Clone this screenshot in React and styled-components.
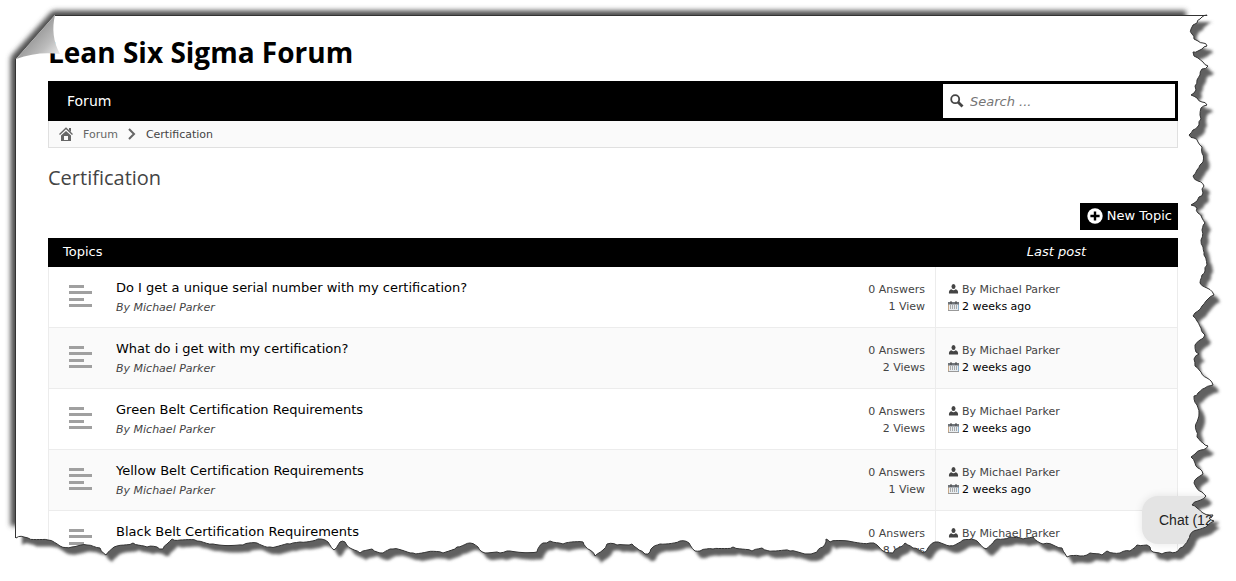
import React from "react";
import styled, { createGlobalStyle } from "styled-components";

const topics = [
  { title: "Do I get a unique serial number with my certification?", views: "1 View" },
  { title: "What do i get with my certification?", views: "2 Views" },
  { title: "Green Belt Certification Requirements", views: "2 Views" },
  { title: "Yellow Belt Certification Requirements", views: "1 View" },
  { title: "Black Belt Certification Requirements", views: "8 Views" },
];

// torn edge, from the top right corner down and back along the bottom
const tornEdge = [
  [1207, 15], [1202, 17], [1200, 19], [1197, 23], [1193, 25], [1191, 29], [1192, 34], [1194, 39], [1198, 41], [1203, 43], [1207, 46],
  [1202, 49], [1198, 51], [1193, 52], [1194, 56], [1198, 58], [1203, 62], [1208, 66], [1202, 69], [1200, 75], [1197, 80],
  [1195, 86], [1196, 90], [1191, 95], [1197, 98], [1202, 102], [1207, 105], [1201, 108], [1200, 115], [1201, 119], [1199, 125],
  [1193, 130], [1189, 135], [1194, 138], [1198, 142], [1202, 147], [1202, 153], [1203, 162], [1200, 165], [1197, 170], [1193, 176],
  [1198, 181], [1204, 186], [1202, 189], [1203, 193], [1199, 197], [1197, 201], [1191, 205], [1197, 208], [1198, 213], [1202, 218],
  [1205, 223], [1202, 230], [1201, 240], [1203, 247], [1204, 255], [1207, 265], [1205, 271], [1202, 275], [1200, 283], [1207, 288],
  [1214, 295], [1208, 299], [1202, 306], [1195, 313], [1193, 316], [1197, 321], [1201, 328], [1205, 335], [1200, 340], [1195, 345],
  [1196, 352], [1199, 354], [1194, 359], [1195, 366], [1201, 372], [1207, 378], [1213, 385], [1205, 388], [1198, 393], [1194, 396],
  [1197, 405], [1199, 413], [1197, 422], [1196, 430], [1197, 437], [1203, 443], [1208, 446], [1201, 450], [1195, 454], [1191, 457],
  [1195, 463], [1200, 469], [1203, 474], [1197, 478], [1194, 483], [1196, 487], [1202, 492], [1206, 496], [1198, 501], [1192, 505],
  [1197, 508], [1203, 513], [1213, 515], [1209, 518], [1214, 521], [1208, 525], [1197, 530], [1190, 535], [1188, 540], [1183, 547],
  [1178, 551], [1170, 552], [1162, 554], [1153, 552], [1150, 547], [1147, 545], [1137, 545], [1130, 551], [1120, 553], [1107, 551],
  [1102, 555], [1090, 553], [1080, 556], [1067, 557], [1062, 548], [1053, 545], [1043, 544], [1033, 537], [1023, 539], [1010, 537],
  [997, 539], [993, 543], [986, 549], [977, 541], [963, 540], [950, 546], [935, 542], [928, 548], [923, 553], [913, 548],
  [905, 543], [898, 548], [893, 553], [883, 551], [877, 545], [870, 543], [848, 541], [830, 542], [826, 539], [823, 547],
  [817, 552], [808, 554], [790, 551], [773, 551], [762, 548], [752, 551], [733, 547], [713, 549], [700, 551], [695, 551],
  [689, 543], [680, 541], [660, 544], [653, 547], [650, 552], [645, 554], [639, 550], [632, 544], [617, 545], [607, 544],
  [603, 550], [595, 556], [590, 550], [583, 542], [563, 544], [550, 541], [543, 543], [537, 552], [507, 551], [500, 553],
  [485, 553], [478, 547], [470, 543], [457, 547], [443, 553], [427, 552], [413, 553], [393, 549], [383, 553], [372, 549],
  [360, 553], [352, 549], [345, 542], [340, 542], [334, 550], [328, 542], [318, 539], [300, 542], [290, 544], [270, 547],
  [257, 543], [243, 545], [213, 544], [197, 541], [180, 540], [172, 539], [167, 544], [163, 549], [157, 547], [147, 547],
  [133, 543], [117, 546], [106, 555], [100, 548], [87, 545], [72, 547], [60, 546], [48, 540], [28, 538], [24, 537], [16, 538],
];

// break long segments into short uneven steps so the paper looks ripped
const roughen = (points) => {
  const out = [points[0]];
  for (let i = 1; i < points.length; i++) {
    const [x1, y1] = points[i - 1];
    const [x2, y2] = points[i];
    const len = Math.hypot(x2 - x1, y2 - y1);
    const steps = Math.max(1, Math.round(len / 3));
    for (let s = 1; s < steps; s++) {
      const t = s / steps;
      const j = Math.sin((i * 7 + s) * 12.9) * 1.1;
      out.push([
        x1 + (x2 - x1) * t - ((y2 - y1) / len) * j,
        y1 + (y2 - y1) * t + ((x2 - x1) / len) * j,
      ]);
    }
    out.push([x2, y2]);
  }
  return out.map((p) => p.map((n) => n.toFixed(1)).join(" ")).join("L");
};

const torn = roughen(tornEdge);
const paper = `M16 59L55 15L${torn}Z`;

const PaperEdge = () => (
  <EdgeSvg viewBox="0 0 1236 581" preserveAspectRatio="none" aria-hidden="true">
    <defs>
      <clipPath id="outside">
        <path d={`M0 0H1236V581H0Z${paper}`} clipRule="evenodd" />
      </clipPath>
      <filter id="soft" x="-5%" y="-5%" width="110%" height="110%">
        <feGaussianBlur stdDeviation="1.6" />
      </filter>
      <filter id="softer" x="-5%" y="-5%" width="110%" height="110%">
        <feGaussianBlur stdDeviation="2.6" />
      </filter>
      <linearGradient id="fold" gradientUnits="userSpaceOnUse" x1="34" y1="36" x2="58" y2="57">
        <stop offset="0" stopColor="#9c9c9c" />
        <stop offset="0.5" stopColor="#bcbcbc" />
        <stop offset="1" stopColor="#ececec" />
      </linearGradient>
    </defs>
    <g clipPath="url(#outside)">
      <rect width="1236" height="581" fill="#fff" />
      <path d={paper} fill="#606060" transform="translate(6 7)" filter="url(#soft)" />
      <path
        d="M16 526V59L55 16H1186"
        fill="none"
        stroke="#505050"
        strokeWidth="11"
        strokeLinejoin="round"
        filter="url(#softer)"
      />
    </g>
    <path d="M16 59L55 15Q50 36 60 54Q38 51 16 59Z" fill="url(#fold)" />
    <path d={`M15.5 538V59M55 15.5H1207L${torn}`} fill="none" stroke="#333" strokeWidth="1" />
  </EdgeSvg>
);

const HomeIcon = () => (
  <svg width="14" height="14" viewBox="0 0 14 14" aria-hidden="true">
    <path d="M0.5 7.5L7 1.3L13.5 7.5" fill="none" stroke="#666" strokeWidth="1.4" />
    <path d="M10 1H12V5L10 3.2ZM2 8.6L7 4L12 8.6V14H2Z" fill="#666" />
    <path d="M5 9H9V13H5Z" fill="#fafafa" />
  </svg>
);

const ChevronIcon = () => (
  <svg width="8" height="12" viewBox="0 0 8 12" aria-hidden="true">
    <path d="M1 1L6 6L1 11" fill="none" stroke="#666" strokeWidth="2" />
  </svg>
);

const SearchIcon = () => (
  <svg width="14" height="14" viewBox="0 0 14 14" aria-hidden="true">
    <circle cx="5.2" cy="5.2" r="4" fill="none" stroke="#444" strokeWidth="1.8" />
    <path d="M8.2 8.2L12.5 12.5" stroke="#444" strokeWidth="2.8" />
  </svg>
);

const PlusIcon = () => (
  <svg width="16" height="16" viewBox="0 0 16 16" aria-hidden="true">
    <circle cx="8" cy="8" r="7.7" fill="#fff" />
    <path d="M8 3.4V12.6M3.4 8H12.6" stroke="#000" strokeWidth="2.4" />
  </svg>
);

const TopicIcon = () => (
  <svg width="23" height="22" viewBox="0 0 23 22" aria-hidden="true">
    <path d="M0 1.5H15M0 7.5H23M0 14.5H15M0 20.5H23" stroke="#a0a0a0" strokeWidth="3" />
  </svg>
);

const UserIcon = () => (
  <svg width="11" height="11" viewBox="0 0 11 11" aria-hidden="true">
    <ellipse cx="5.5" cy="2.6" rx="2" ry="2.5" fill="#444" />
    <path d="M1 9.5Q0.4 6.2 3.4 5.3Q5.5 7.2 7.6 5.3Q10.6 6.2 10 9.5Z" fill="#444" />
  </svg>
);

const CalendarIcon = () => (
  <svg width="11" height="11" viewBox="0 0 11 11" aria-hidden="true">
    <path d="M0.5 1.5H10.5V9.5H0.5Z" fill="#e8ecef" />
    <path d="M0.5 1.5V10" stroke="#c9a987" />
    <path d="M10.5 1.5V10" stroke="#8db4d2" />
    <path d="M0 9.5H11" stroke="#999" />
    <path d="M0 1H11V3.5H0Z" fill="#70757a" />
    <path d="M3 0V3M8 0V3" stroke="#444" />
    <path d="M2 5H9.5M2 7H9.5" stroke="#666" strokeDasharray="1 1" />
  </svg>
);

const App = () => {
  return (
    <>
      <GlobalStyle />
      <Page>
        <Content>
          <SiteTitle>Lean Six Sigma Forum</SiteTitle>
          <Nav>
            <NavLink href="#forum">Forum</NavLink>
            <SearchBox>
              <SearchIcon />
              <input type="text" placeholder="Search ..." aria-label="Search" />
            </SearchBox>
          </Nav>
          <Breadcrumb>
            <HomeIcon />
            <a href="#forum">Forum</a>
            <ChevronIcon />
            <span>Certification</span>
          </Breadcrumb>
          <Heading>Certification</Heading>
          <Actions>
            <NewTopic type="button">
              <PlusIcon />
              New Topic
            </NewTopic>
          </Actions>
          <TopicTable>
            <colgroup>
              <Col $width={68} />
              <Col />
              <Col $width={120} />
              <Col $width={243} />
            </colgroup>
            <thead>
              <tr>
                <th colSpan="3">Topics</th>
                <LastHead>Last post</LastHead>
              </tr>
            </thead>
            <tbody>
              {topics.map((topic) => (
                <TopicRow key={topic.title}>
                  <IconCell>
                    <TopicIcon />
                  </IconCell>
                  <TitleCell>
                    <a href="#topic">{topic.title}</a>
                    <p>By Michael Parker</p>
                  </TitleCell>
                  <StatsCell>
                    <div>0 Answers</div>
                    <div>{topic.views}</div>
                  </StatsCell>
                  <LastCell>
                    <Meta>
                      <UserIcon />
                      By Michael Parker
                    </Meta>
                    <Meta $dark>
                      <CalendarIcon />
                      <a href="#post">2 weeks ago</a>
                    </Meta>
                  </LastCell>
                </TopicRow>
              ))}
            </tbody>
          </TopicTable>
        </Content>
        <ChatButton type="button">Chat (12)</ChatButton>
        <PaperEdge />
      </Page>
    </>
  );
};

const GlobalStyle = createGlobalStyle`
  * {
    box-sizing: border-box;
  }
  body {
    margin: 0;
    background: #fff;
    color: #444;
    font-family: Verdana, "DejaVu Sans", sans-serif;
    font-size: 11px;
  }
  a {
    color: inherit;
    text-decoration: none;
  }
  svg {
    flex-shrink: 0;
  }
`;

const Page = styled.div`
  position: relative;
  height: 100vh;
  overflow: hidden;
`;

const Content = styled.main`
  padding: 32px 58px 0 48px;
`;

const SiteTitle = styled.h1`
  margin: 0 0 9px;
  color: #000;
  font-family: "Open Sans", sans-serif;
  font-size: 28px;
  font-weight: 700;
  line-height: 40px;
`;

const Nav = styled.nav`
  display: flex;
  justify-content: space-between;
  align-items: center;
  height: 40px;
  padding: 3px;
  background: #000;
`;

const NavLink = styled.a`
  padding-left: 16px;
  color: #fff;
  font-size: 14px;
`;

const SearchBox = styled.label`
  display: flex;
  align-items: center;
  gap: 6px;
  width: 232px;
  height: 34px;
  padding: 0 7px;
  background: #fff;
  input {
    flex: 1;
    min-width: 0;
    padding: 0;
    border: none;
    outline: none;
    background: transparent;
    font-family: inherit;
    font-size: 13px;
    font-style: italic;
    &::placeholder {
      color: #757575;
    }
  }
`;

const Breadcrumb = styled.div`
  display: flex;
  align-items: center;
  gap: 10px;
  height: 27px;
  padding: 0 10px;
  border: 1px solid #e0e0e0;
  border-top: none;
  background: #fafafa;
  a {
    color: #666;
  }
`;

const Heading = styled.h2`
  margin: 16px 0 11px;
  font-family: "Open Sans", sans-serif;
  font-size: 20px;
  font-weight: 400;
  line-height: 28px;
`;

const Actions = styled.div`
  display: flex;
  justify-content: flex-end;
  margin-bottom: 8px;
`;

const NewTopic = styled.button`
  display: flex;
  align-items: center;
  gap: 4px;
  height: 27px;
  padding: 0 6px 2px 7px;
  border: none;
  background: #000;
  color: #fff;
  font-family: inherit;
  font-size: 13px;
  cursor: pointer;
`;

const TopicTable = styled.table`
  width: 100%;
  border-collapse: separate;
  border-spacing: 0;
  table-layout: fixed;
  th {
    height: 29px;
    padding: 0 15px 2px;
    background: #000;
    color: #fff;
    font-size: 13px;
    font-weight: 400;
    text-align: left;
  }
  td {
    height: 61px;
    padding: 2px 0 0;
    border-bottom: 1px solid #ececec;
  }
`;

const Col = styled.col`
  width: ${({ $width }) => ($width ? `${$width}px` : "auto")};
`;

const LastHead = styled.th`
  && {
    font-style: italic;
    text-align: center;
  }
`;

const TopicRow = styled.tr`
  &:nth-child(even) {
    background: #fafafa;
  }
`;

const IconCell = styled.td`
  border-left: 1px solid #ececec;
  && {
    padding: 0 0 2px 20px;
  }
  svg {
    display: block;
  }
`;

const TitleCell = styled.td`
  a {
    display: block;
    color: #000;
    font-size: 13px;
    line-height: 20px;
  }
  p {
    margin: 0;
    font-style: italic;
    line-height: 20px;
  }
`;

const StatsCell = styled.td`
  text-align: right;
  line-height: 17px;
  && {
    padding-right: 10px;
  }
`;

const LastCell = styled.td`
  border-left: 1px solid #ececec;
  border-right: 1px solid #ececec;
  line-height: 17px;
  && {
    padding-left: 12px;
  }
`;

const Meta = styled.div`
  display: flex;
  align-items: center;
  gap: 3px;
  color: ${({ $dark }) => ($dark ? "#000" : "#444")};
`;

const ChatButton = styled.button`
  position: absolute;
  right: 0;
  bottom: 37px;
  width: 94px;
  height: 48px;
  padding: 0 0 0 17px;
  border: none;
  border-radius: 16px;
  background: #e4e4e4;
  box-shadow: 0 0 8px rgba(0, 0, 0, 0.1);
  color: #222;
  font-family: Arial, "Liberation Sans", sans-serif;
  font-size: 14px;
  text-align: left;
  cursor: pointer;
`;

const EdgeSvg = styled.svg`
  position: absolute;
  inset: 0;
  width: 100%;
  height: 100%;
  pointer-events: none;
`;

export default App;
